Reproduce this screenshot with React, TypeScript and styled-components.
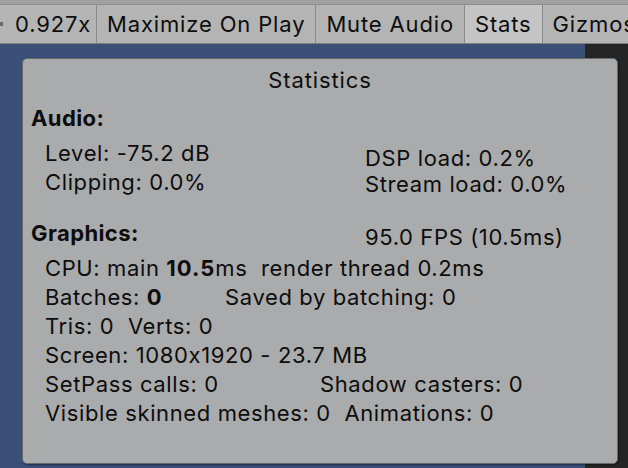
import React from "react";
import styled, { createGlobalStyle } from "styled-components";

const Global = createGlobalStyle`
  html, body { margin: 0; padding: 0; width: 628px; height: 468px; overflow: hidden; }
  body {
    font-family: Inter, "Noto Sans", sans-serif;
    color: #0d0d0d;
    font-feature-settings: "calt" 0;
  }
`;

const Screen = styled.div`
  width: 628px;
  height: 468px;
  display: flex;
  flex-direction: column;
  overflow: hidden;
`;

const Toolbar = styled.div`
  height: 44px;
  box-sizing: border-box;
  padding-top: 4px;
  background: #a0a0a0;
  border-bottom: 1px solid #7d7d7d;
  display: flex;
  font-size: 22px;
  letter-spacing: 0.85px;
  white-space: nowrap;
`;

const ToolButton = styled.div<{ $active?: boolean }>`
  flex: none;
  display: flex;
  align-items: center;
  padding: 0 10px;
  border-top: 1px solid #8e8e8e;
  border-right: 1px solid #8a8a8a;
  background: ${(p) => (p.$active ? "#c4c4c4" : "#b4b4b4")};
  color: #0d0d0d;
`;

const ScaleItem = styled(ToolButton)`
  width: 97px;
  box-sizing: border-box;
  padding: 0;
  gap: 12px;
`;

const SliderEnd = styled.span`
  width: 3px;
  height: 4px;
  background: #6a6a6a;
`;

const Main = styled.div`
  flex: 1;
  display: flex;
  position: relative;
`;

const GameView = styled.div`
  width: 585px;
  background: #3a5079;
`;

const Gutter = styled.div`
  flex: 1;
  background: #252525;
`;

const Panel = styled.div`
  position: absolute;
  left: 22px;
  top: 14px;
  width: 596px;
  height: 406px;
  box-sizing: border-box;
  background: #aaabac;
  border: 1px solid #6a6a6a;
  border-radius: 5px;
  box-shadow: 1px 1px 2px rgba(0, 0, 0, 0.45);
  padding: 7px 0 0 8px;
  font-size: 22px;
  line-height: 29px;
  letter-spacing: 0.62px;
  white-space: pre;
`;

const Title = styled.div`
  text-align: center;
  padding-right: 8px;
  letter-spacing: 0.9px;
`;

const Heading = styled.div<{ $w?: number; $gap?: number }>`
  font-weight: 700;
  letter-spacing: 0.4px;
  ${(p) => (p.$w ? `width: ${p.$w}px; flex: none;` : "")}
  margin-bottom: ${(p) => p.$gap ?? 0}px;
`;

const Section = styled.div<{ $top: number }>`
  margin-top: ${(p) => p.$top}px;
`;

const Columns = styled.div`
  display: flex;
`;

const LeftCol = styled.div`
  width: 334px;
  padding-left: 14px;
  box-sizing: border-box;
`;

const RightCol = styled.div<{ $shift: number; $lh?: number }>`
  margin-top: ${(p) => p.$shift}px;
  line-height: ${(p) => p.$lh ?? 29}px;
`;

const HeadRow = styled.div`
  display: flex;
`;

const Lines = styled.div`
  padding-left: 14px;
  margin-top: 2px;
`;

const Row = styled.div`
  display: flex;
`;

const Cell = styled.span<{ $w: number }>`
  width: ${(p) => p.$w}px;
  flex: none;
`;

const B = styled.b`
  font-weight: 700;
  letter-spacing: 1px;
`;

export default function App() {
  return (
    <Screen>
      <Global />
      <Toolbar>
        <ScaleItem>
          <SliderEnd />
          0.927x
        </ScaleItem>
        <ToolButton>Maximize On Play</ToolButton>
        <ToolButton>Mute Audio</ToolButton>
        <ToolButton $active>Stats</ToolButton>
        <ToolButton>Gizmos</ToolButton>
      </Toolbar>
      <Main>
        <GameView />
        <Gutter />
        <Panel>
          <Title>Statistics</Title>
          <Section $top={9}>
            <Heading $gap={6}>Audio:</Heading>
            <Columns>
              <LeftCol>
                <div>Level: -75.2 dB</div>
                <div>Clipping: 0.0%</div>
              </LeftCol>
              <RightCol $shift={6} $lh={26}>
                <div>DSP load: 0.2%</div>
                <div>Stream load: 0.0%</div>
              </RightCol>
            </Columns>
          </Section>
          <Section $top={22}>
            <HeadRow>
              <Heading $w={334}>Graphics:</Heading>
              <RightCol $shift={4}>95.0 FPS (10.5ms)</RightCol>
            </HeadRow>
            <Lines>
              <div>
                CPU: main <B>10.5</B>ms  render thread 0.2ms
              </div>
              <Row>
                <Cell $w={180}>
                  Batches: <B>0</B>
                </Cell>
                <span>Saved by batching: 0</span>
              </Row>
              <div>Tris: 0  Verts: 0</div>
              <div>Screen: 1080x1920 - 23.7 MB</div>
              <Row>
                <Cell $w={275}>SetPass calls: 0</Cell>
                <span>Shadow casters: 0</span>
              </Row>
              <div>Visible skinned meshes: 0  Animations: 0</div>
            </Lines>
          </Section>
        </Panel>
      </Main>
    </Screen>
  );
}
